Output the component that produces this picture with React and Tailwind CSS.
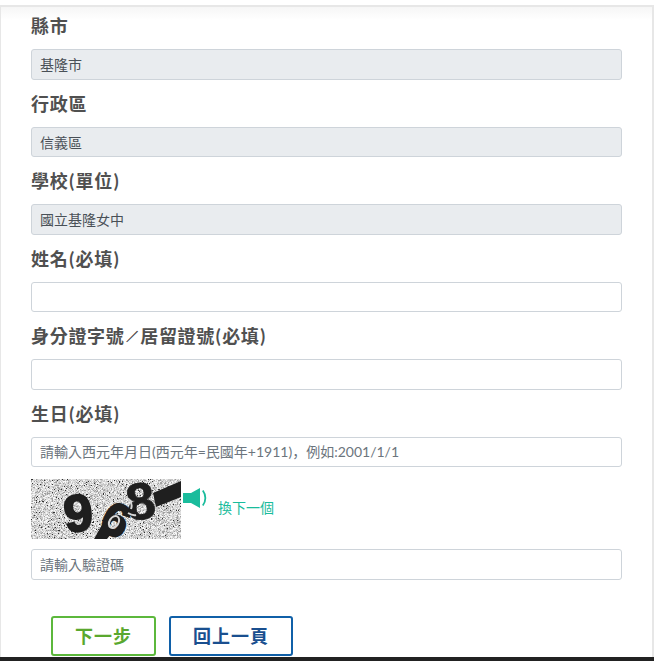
import React from "react";

const fontClass = "font-['Lato','Noto_Sans_CJK_TC',sans-serif]";

function P({ children }) {
  return <span className="mx-[0.75px]">{children}</span>;
}

function Field({ label, value, placeholder, disabled, jp }) {
  return (
    <div className="flex flex-col">
      <label className="h-[47px] pt-[11px] text-[18px] leading-[27px] font-bold tracking-[0.7px] text-[#505050]">{label}</label>
      {disabled ? (
        <div className="h-[30.5px] rounded-[3px] border border-[#ced4da] bg-[#e9ecef] px-2 text-[14px] leading-[30.5px] text-[#495057]">{value}</div>
      ) : (
        <input
          readOnly
          placeholder={placeholder}
          className={
            "h-[30.5px] w-full rounded-[3px] border border-[#ced4da] bg-white px-2 text-[14px] text-[#495057] outline-none placeholder:text-[#6c757d] " +
            (jp ? "font-['Lato','Noto_Sans_CJK_JP',sans-serif]" : "")
          }
        />
      )}
    </div>
  );
}

function noise() {
  let s = 12345;
  const r = () => ((s = (s * 1664525 + 1013904223) >>> 0) / 4294967296);
  const out = [];
  for (let y = 0; y < 60; y++) {
    for (let x = 0; x < 150; x++) {
      const v = r();
      const c = v < 0.03 ? "#333333" : v < 0.2 ? "#a0a0a0" : v < 0.5 ? "#c8c8c8" : v < 0.8 ? "#e0e0e0" : "#f6f6f6";
      out.push(<rect key={x + "-" + y} x={x} y={y} width="1" height="1" fill={c} />);
    }
  }
  return out;
}

function Captcha() {
  return (
    <svg width="150" height="60" viewBox="0 0 150 60" className="block shrink-0 overflow-visible">
      {noise()}
      <g fill="#1f1f1f">
        <path d="M122 14 L150 2 L150 18 L125 28 Z" />
        <path d="M63 60 L72 44 L84 50 L76 60 Z" />
      </g>
      <g fontFamily="'Liberation Sans',sans-serif" fontWeight="700" fill="#1f1f1f" textAnchor="middle">
        <text fontSize="52" stroke="#1f1f1f" strokeWidth="2" transform="translate(49 52) rotate(-6)">9</text>
        <text fontSize="46" stroke="#1f1f1f" strokeWidth="2.5" transform="translate(78 55) rotate(26)">6</text>
        <text fontSize="52" stroke="#1f1f1f" strokeWidth="0.8" transform="translate(112 40) rotate(-8)">8</text>
      </g>
      <g fill="none" stroke="#d8d8d8" strokeWidth="2">
        <ellipse cx="83" cy="43" rx="4.5" ry="6.5" transform="rotate(32 83 43)" />
        <path d="M98 20 q4 5 2 10 M97 34 q5 3 8 2" />
      </g>
    </svg>
  );
}

function Speaker() {
  return (
    <svg width="26" height="22" viewBox="0 0 26 22" className="block shrink-0">
      <path d="M0 5h8L17 0v20L8 15H0z" fill="#1abc9c" />
      <path d="M19.8 2.5c3.4 4.5 3.4 10.5 0 15" stroke="#1abc9c" strokeWidth="1.8" fill="none" />
    </svg>
  );
}

export default function App() {
  return (
    <div className={"flex h-[661px] w-[654px] flex-col overflow-hidden bg-white " + fontClass}>
      <div className="mt-[5px] min-h-0 flex-1 border-t-2 border-r-2 border-l border-[#e7e7e7] bg-gradient-to-b from-[#f6f6f6] via-white via-[2%] to-white pr-[30px] pl-[30px]">
        <div className="-mt-[5px] flex flex-col">
          <Field label="縣市" value="基隆市" disabled />
          <Field label="行政區" value="信義區" disabled />
          <Field label={<>學校<P>(</P>單位<P>)</P></>} value="國立基隆女中" disabled />
          <Field label={<>姓名<P>(</P>必填<P>)</P></>} />
          <Field label={<>身分證字號<span className="mx-[-1.5px] inline-block origin-center scale-[0.65] [-webkit-text-stroke:0.7px_#505050]">／</span>居留證號<P>(</P>必填<P>)</P></>} />
          <Field label={<>生日<P>(</P>必填<P>)</P></>} placeholder="請輸入西元年月日(西元年=民國年+1911)，例如:2001/1/1" jp />
        </div>
        <div className="mt-[12px] flex items-start">
          <Captcha />
          <div className="mt-[9px] ml-[2px]"><Speaker /></div>
          <a className="mt-[20px] ml-[9px] text-[14px] leading-[18px] text-[#1abc9c]">換下一個</a>
        </div>
        <input
          readOnly
          placeholder="請輸入驗證碼"
          className="mt-[10px] block h-[31px] w-full rounded-[3px] border border-[#ced4da] bg-white px-2 text-[14px] outline-none placeholder:text-[#6c757d]"
        />
        <div className="mt-[36px] flex gap-[13px] pl-[20px]">
          <button className="h-[40px] w-[105px] rounded-[3px] border-2 border-[#5cb83c] bg-white text-[18px] font-bold tracking-[1px] text-[#5aa82e]">下一步</button>
          <button className="h-[40px] w-[124px] rounded-[3px] border-2 border-[#1060a8] bg-white text-[18px] font-bold tracking-[1px] text-[#1a4f8f]">回上一頁</button>
        </div>
      </div>
      <div className="h-[4px] shrink-0 bg-[#222222]" />
    </div>
  );
}
